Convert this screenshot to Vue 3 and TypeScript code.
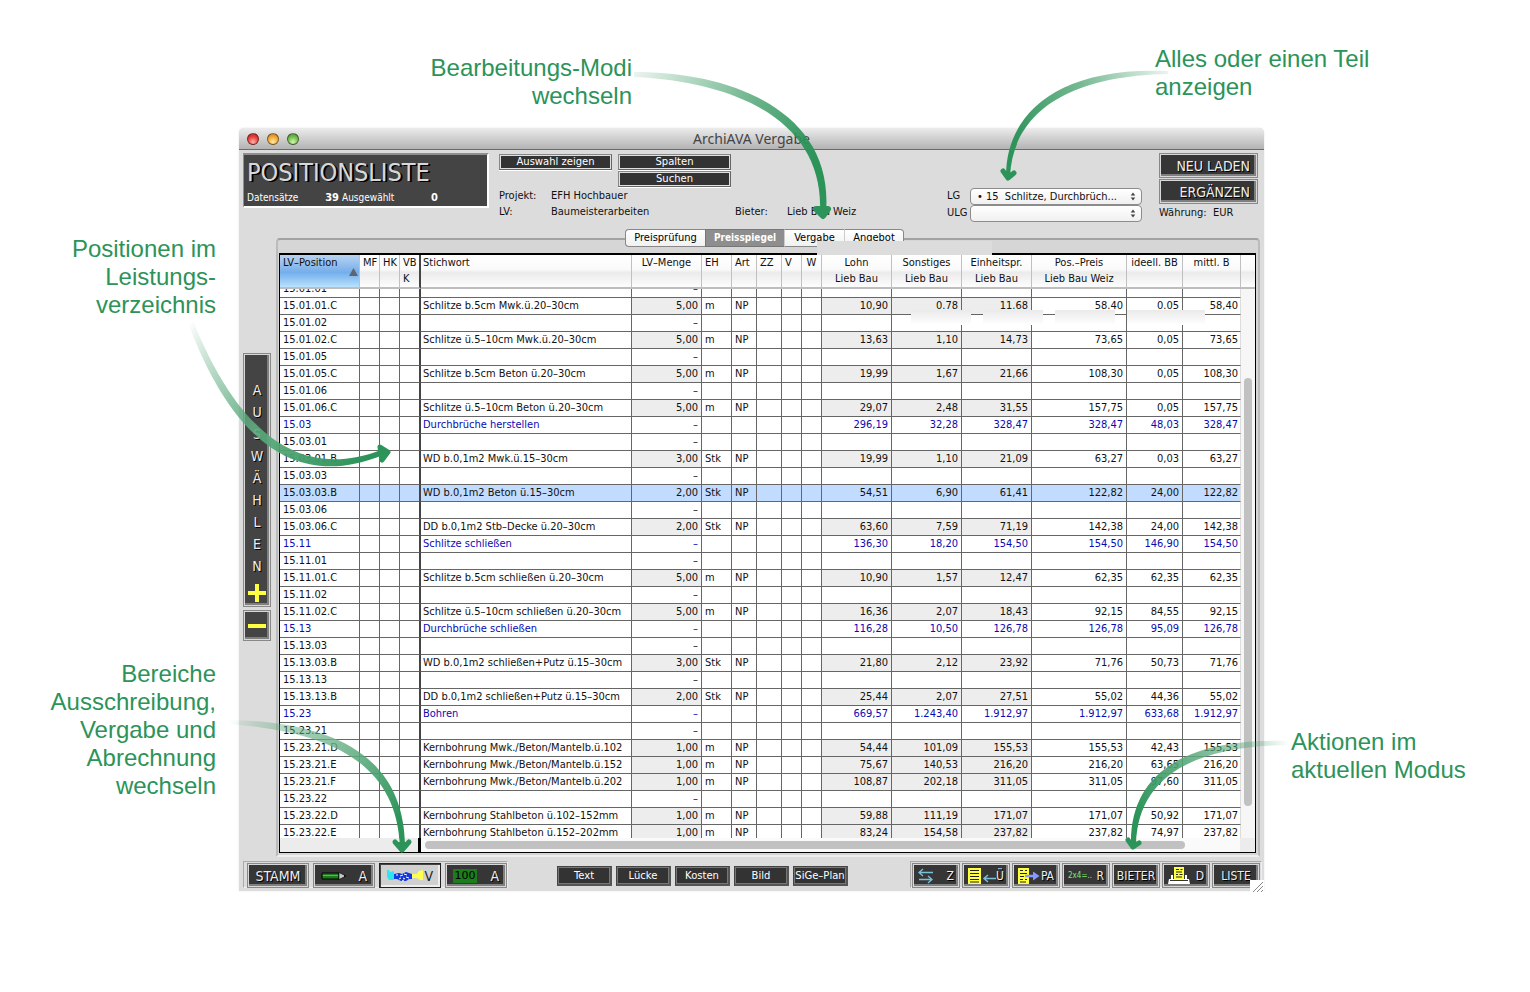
<script setup lang="ts">
import { onMounted, ref } from 'vue'

type Kind = 'empty' | 'sum' | 'item'
interface Row {
  pos: string
  kind: Kind
  text: string
  qty: string
  unit: string
  prices: string[]
}

const empty = (pos: string): Row => ({ pos, kind: 'empty', text: '', qty: '–', unit: '', prices: ['', '', '', '', '', ''] })
const sum = (pos: string, text: string, prices: string): Row => ({ pos, kind: 'sum', text, qty: '–', unit: '', prices: prices.split(' ') })
const item = (pos: string, text: string, qty: string, unit: string, prices: string): Row => ({
  pos, kind: 'item', text, qty, unit, prices: prices.split(' '),
})

const rows: Row[] = [
  empty('15.01.01'),
  item('15.01.01.C', 'Schlitze b.5cm Mwk.ü.20–30cm', '5,00', 'm', '10,90 0.78 11.68 58.40 0.05 58,40'),
  empty('15.01.02'),
  item('15.01.02.C', 'Schlitze ü.5–10cm Mwk.ü.20–30cm', '5,00', 'm', '13,63 1,10 14,73 73,65 0,05 73,65'),
  empty('15.01.05'),
  item('15.01.05.C', 'Schlitze b.5cm Beton ü.20–30cm', '5,00', 'm', '19,99 1,67 21,66 108,30 0,05 108,30'),
  empty('15.01.06'),
  item('15.01.06.C', 'Schlitze ü.5–10cm Beton ü.20–30cm', '5,00', 'm', '29,07 2,48 31,55 157,75 0,05 157,75'),
  sum('15.03', 'Durchbrüche herstellen', '296,19 32,28 328,47 328,47 48,03 328,47'),
  empty('15.03.01'),
  item('15.03.01.B', 'WD b.0,1m2 Mwk.ü.15–30cm', '3,00', 'Stk', '19,99 1,10 21,09 63,27 0,03 63,27'),
  empty('15.03.03'),
  item('15.03.03.B', 'WD b.0,1m2 Beton ü.15–30cm', '2,00', 'Stk', '54,51 6,90 61,41 122,82 24,00 122,82'),
  empty('15.03.06'),
  item('15.03.06.C', 'DD b.0,1m2 Stb–Decke ü.20–30cm', '2,00', 'Stk', '63,60 7,59 71,19 142,38 24,00 142,38'),
  sum('15.11', 'Schlitze schließen', '136,30 18,20 154,50 154,50 146,90 154,50'),
  empty('15.11.01'),
  item('15.11.01.C', 'Schlitze b.5cm schließen ü.20–30cm', '5,00', 'm', '10,90 1,57 12,47 62,35 62,35 62,35'),
  empty('15.11.02'),
  item('15.11.02.C', 'Schlitze ü.5–10cm schließen ü.20–30cm', '5,00', 'm', '16,36 2,07 18,43 92,15 84,55 92,15'),
  sum('15.13', 'Durchbrüche schließen', '116,28 10,50 126,78 126,78 95,09 126,78'),
  empty('15.13.03'),
  item('15.13.03.B', 'WD b.0,1m2 schließen+Putz ü.15–30cm', '3,00', 'Stk', '21,80 2,12 23,92 71,76 50,73 71,76'),
  empty('15.13.13'),
  item('15.13.13.B', 'DD b.0,1m2 schließen+Putz ü.15–30cm', '2,00', 'Stk', '25,44 2,07 27,51 55,02 44,36 55,02'),
  sum('15.23', 'Bohren', '669,57 1.243,40 1.912,97 1.912,97 633,68 1.912,97'),
  empty('15.23.21'),
  item('15.23.21.D', 'Kernbohrung Mwk./Beton/Mantelb.ü.102', '1,00', 'm', '54,44 101,09 155,53 155,53 42,43 155,53'),
  item('15.23.21.E', 'Kernbohrung Mwk./Beton/Mantelb.ü.152', '1,00', 'm', '75,67 140,53 216,20 216,20 63,65 216,20'),
  item('15.23.21.F', 'Kernbohrung Mwk./Beton/Mantelb.ü.202', '1,00', 'm', '108,87 202,18 311,05 311,05 97,60 311,05'),
  empty('15.23.22'),
  item('15.23.22.D', 'Kernbohrung Stahlbeton ü.102–152mm', '1,00', 'm', '59,88 111,19 171,07 171,07 50,92 171,07'),
  item('15.23.22.E', 'Kernbohrung Stahlbeton ü.152–202mm', '1,00', 'm', '83,24 154,58 237,82 237,82 74,97 237,82'),
]

const priceHeads = [
  ['Lohn', 'Lieb Bau'],
  ['Sonstiges', 'Lieb Bau'],
  ['Einheitspr.', 'Lieb Bau'],
  ['Pos.–Preis', 'Lieb Bau Weiz'],
  ['ideell. BB', ''],
  ['mittl. B', ''],
]
const tabs = ['Preisprüfung', 'Preisspiegel', 'Vergabe', 'Angebot']
const activeTab = ref('Preisspiegel')
const selected = ref('15.03.03.B')
const textButtons = ['Text', 'Lücke', 'Kosten', 'Bild', 'SiGe–Plan']
const viewport = ref<HTMLElement | null>(null)

onMounted(() => {
  if (viewport.value) viewport.value.scrollTop = 8
})
</script>

<template>
  <main class="page">
    <section class="window">
      <header class="titlebar">
        <div class="lights">
          <button class="light red" aria-label="Schließen"></button>
          <button class="light amber" aria-label="Minimieren"></button>
          <button class="light green" aria-label="Vergrößern"></button>
        </div>
        <span class="wintitle">ArchiAVA Vergabe</span>
      </header>

      <div class="top">
        <div class="banner">
          <h1>POSITIONSLISTE</h1>
          <div class="counts">
            <span class="c1">Datensätze</span><b class="n1">39</b><span class="c2">Ausgewählt</span><b class="n2">0</b>
          </div>
        </div>
        <div class="mid">
          <div class="midbtns">
            <button class="mini">Auswahl zeigen</button>
            <div class="stack">
              <button class="mini">Spalten</button>
              <button class="mini">Suchen</button>
            </div>
          </div>
          <div class="info">
            <span>Projekt:</span><span>EFH Hochbauer</span><span></span><span></span>
            <span>LV:</span><span>Baumeisterarbeiten</span><span>Bieter:</span><span>Lieb Bau Weiz</span>
          </div>
        </div>
        <div class="filters">
          <label for="lg">LG</label>
          <div class="pop">
            <select id="lg"><option>• 15&nbsp; Schlitze, Durchbrüch...</option></select>
            <svg viewBox="0 0 6 10"><path d="M0.500 4 L3 0.500 L5.500 4Z M0.500 6 L3 9.500 L5.500 6Z" fill="#444" /></svg>
          </div>
          <label for="ulg">ULG</label>
          <div class="pop">
            <select id="ulg"><option></option></select>
            <svg viewBox="0 0 6 10"><path d="M0.500 4 L3 0.500 L5.500 4Z M0.500 6 L3 9.500 L5.500 6Z" fill="#444" /></svg>
          </div>
        </div>
        <div class="actions">
          <button class="dark big">NEU LADEN</button>
          <button class="dark big">ERGÄNZEN</button>
          <span class="currency">Währung:&nbsp; EUR</span>
        </div>
      </div>

      <div class="middle">
        <aside class="rail">
          <button class="dark tall" aria-label="Auswählen hinzufügen">
            <span v-for="(c, i) in 'AUSWÄHLEN'" :key="i" class="letter">{{ c }}</span>
            <svg class="sign" viewBox="0 0 18 18"><path d="M7 0h4v7h7v4h-7v7H7v-7H0V7h7z" fill="#ffff42" /></svg>
          </button>
          <button class="dark minus" aria-label="Auswahl entfernen">
            <svg class="sign" viewBox="0 0 18 18"><path d="M0 7h18v4H0z" fill="#ffff42" /></svg>
          </button>
        </aside>

        <div class="tabpanel">
          <nav class="tabs">
            <button v-for="t in tabs" :key="t" :class="{ on: t === activeTab }" @click="activeTab = t">{{ t }}</button>
          </nav>
          <div class="frame">
            <div class="gridrow">
              <div ref="viewport" class="viewport">
                <table>
                  <colgroup>
                    <col class="w80" /><col class="w20" /><col class="w20" /><col class="w21" /><col />
                    <col class="w70" /><col class="w30" /><col class="w25" /><col class="w25" /><col class="w20" /><col class="w20" />
                    <col class="w70" /><col class="w70" /><col class="w70" /><col class="w95" /><col class="w56" /><col class="w58" />
                  </colgroup>
                  <thead>
                    <tr>
                      <th class="sorted">LV–Position<svg viewBox="0 0 9 8"><path d="M4.500 0L9 8H0z" fill="#5d6670" /></svg></th>
                      <th>MF</th><th>HK</th><th class="thick">VB<br />K</th><th>Stichwort</th>
                      <th class="c">LV–Menge</th><th>EH</th><th>Art</th><th>ZZ</th><th>V</th><th class="c">W</th>
                      <th v-for="h in priceHeads" :key="h[0]" class="c">{{ h[0] }}<br />{{ h[1] }}</th>
                    </tr>
                  </thead>
                  <tbody>
                    <tr v-for="r in rows" :key="r.pos" :class="[r.kind, { sel: r.pos === selected }]" @click="selected = r.pos">
                      <td>{{ r.pos }}</td><td></td><td></td><td class="thick"></td>
                      <td>{{ r.text }}</td>
                      <td class="num shade">{{ r.qty }}</td>
                      <td>{{ r.unit }}</td>
                      <td>{{ r.kind === 'item' ? 'NP' : '' }}</td>
                      <td></td><td></td><td></td>
                      <td v-for="(p, i) in r.prices" :key="i" class="num" :class="{ shade: i < 3, last: i === 5 }">{{ p }}</td>
                    </tr>
                  </tbody>
                </table>
              </div>
              <div class="vscroll">
                <div class="vhead"></div>
                <div class="vthumb"></div>
              </div>
            </div>
            <div class="hscroll">
              <div class="hleft"></div>
              <div class="hthumb"></div>
              <div class="hend"></div>
            </div>
            <div class="smears"><i></i><i></i><i></i><i class="wide"></i></div>
          </div>
          <div class="patch"></div>
        </div>
      </div>

      <footer class="bottom">
        <div class="group">
          <button class="dark nav">STAMM</button>
          <button class="dark nav icon">
            <svg width="26" height="10" viewBox="0 0 26 10"><path d="M1 2h17v6H1z" fill="#1d7d1d" stroke="#000" /><path d="M2 4.500h15" stroke="#5cb85c" /><path d="M18 1.500L25 5l-7 3.500z" fill="#c9c9c9" stroke="#000" stroke-width=".6" /><path d="M23 4l2.500 1L23 6z" /></svg>
            A
          </button>
          <button class="dark nav icon pressed">
            <svg width="36" height="14" viewBox="0 0 36 14"><path d="M0 1h2l1 2 4-1v9H2L0 8z" fill="#2fe4ee" /><path d="M36 1v10h-3l-3-2h-5V5h5l2-3z" fill="#ffff50" /><path d="M7 5l5-1 3 1 4-2 6 2v5h-3l-3 2h-5l-4-2H7z" fill="#1238e0" /><path d="M9 6h2M13 7l3-1M17 5l3 1M12 10l2-1M16 9l2 1M19 8l3 1M15 12l2-1" stroke="#fff" /></svg>
            V
          </button>
          <button class="dark nav icon">
            <span class="hundred">100</span>
            A
          </button>
        </div>

        <div class="texts">
          <button v-for="b in textButtons" :key="b">{{ b }}</button>
        </div>

        <div class="group right">
          <button class="dark act icon">
            <svg width="16" height="16" viewBox="0 0 16 16"><path d="M1 4.500h14M5 1L1 4.500 5 8M1 11.500h13M10 8l4 3.500-4 3.500" fill="none" stroke="#7cc0d8" stroke-width="1.300" /></svg>
            Z
          </button>
          <button class="dark act icon">
            <svg width="28" height="16" viewBox="0 0 28 16"><path d="M0 0h13v16H0z" fill="#ffff42" /><path d="M2 2.500h9M2 5.500h9M2 8.500h9M2 11.500h9M2 14h9" stroke="#222" /><path d="M28 10.500H17M20 7l-4 3.500L20 14" fill="none" stroke="#7cc0d8" stroke-width="1.500" /></svg>
            Ü
          </button>
          <button class="dark act icon">
            <svg width="22" height="16" viewBox="0 0 22 16"><path d="M0 0h11v16H0z" fill="#ffff42" /><path d="M2 2.500h3M7 2.500h2M2 5.500h7M2 8.500h4M2 11.500h3M7 11.500h2M2 14h6" stroke="#222" /><path d="M7 8h9" stroke="#8a98ff" stroke-width="2.500" /><path d="M15 3.500L21.500 8 15 12.500z" fill="#8a98ff" /></svg>
            PA
          </button>
          <button class="dark act icon"><span class="calc">2x4=..</span>R</button>
          <button class="dark act">BIETER</button>
          <button class="dark act icon">
            <svg width="22" height="18" viewBox="0 0 22 18"><path d="M6 0h10v12H6z" fill="#ffff42" /><path d="M8 2.500h3M12.500 2.500h2M8 5h6M8 7.500h2M11.500 7.500h3M8 10h6" stroke="#222" /><path d="M3 8h2v4h12V8h2v4h2l1 5H0l1-5h2z" fill="#fff" /><path d="M2 13.500h18" stroke="#333" /></svg>
            D
          </button>
          <button class="dark act">LISTE</button>
        </div>
        <svg class="grip" viewBox="0 0 14 13"><path d="M0 0h14v13H0z" fill="#fff" /><path d="M3 12L13 2M7 12l6-6M11 12l2-2" stroke="#8a8a8a" /></svg>
      </footer>
    </section>

    <p class="note n-modes">Bearbeitungs-Modi<br />wechseln</p>
    <p class="note n-filter">Alles oder einen Teil<br />anzeigen</p>
    <p class="note n-pos">Positionen im<br />Leistungs-<br />verzeichnis</p>
    <p class="note n-areas">Bereiche<br />Ausschreibung,<br />Vergabe und<br />Abrechnung<br />wechseln</p>
    <p class="note n-actions">Aktionen im<br />aktuellen Modus</p>

    <svg class="arrows left" width="900" height="992" viewBox="0 0 900 992">
      <defs>
        <linearGradient id="ga" gradientUnits="userSpaceOnUse" x1="634" y1="75" x2="815" y2="160">
          <stop offset="0" stop-color="#2c9359" stop-opacity="0.100" /><stop offset=".6" stop-color="#2c9359" stop-opacity=".7" /><stop offset="1" stop-color="#2c9359" />
        </linearGradient>
        <linearGradient id="gc" gradientUnits="userSpaceOnUse" x1="190" y1="322" x2="370" y2="455">
          <stop offset="0" stop-color="#2c9359" stop-opacity="0" /><stop offset=".5" stop-color="#5fac80" stop-opacity=".9" /><stop offset="1" stop-color="#2c9359" />
        </linearGradient>
        <linearGradient id="gd" gradientUnits="userSpaceOnUse" x1="229" y1="722" x2="400" y2="820">
          <stop offset="0" stop-color="#2c9359" stop-opacity="0" /><stop offset=".5" stop-color="#6fb48c" stop-opacity=".8" /><stop offset="1" stop-color="#2c9359" />
        </linearGradient>
      </defs>
      <path fill="url(#ga)" d="M634 72C740 72 834 116 826 212L820 212C824 124 742 82 634 77Z" />
      <path class="head" d="M816 209L823 216L828 209Z" />
      <path fill="url(#gc)" d="M188 323C218 402 274 500 383 455L381 450C282 488 226 402 193 321Z" />
      <path class="head thin" d="M380 447L388 452L382 460Z" />
      <path fill="url(#gd)" d="M229 720C340 722 404 760 405 846L400 846C396 766 336 732 229 724Z" />
      <path class="head thin" d="M395 842L402 850L409 842" />
    </svg>
    <svg class="arrows rightside" width="530" height="992" viewBox="1000 0 530 992">
      <defs>
        <linearGradient id="gb" gradientUnits="userSpaceOnUse" x1="1168" y1="72" x2="1012" y2="140">
          <stop offset="0" stop-color="#2c9359" stop-opacity=".1" /><stop offset=".5" stop-color="#2c9359" stop-opacity=".65" /><stop offset="1" stop-color="#2c9359" />
        </linearGradient>
        <linearGradient id="ge" gradientUnits="userSpaceOnUse" x1="1289" y1="743" x2="1138" y2="820">
          <stop offset="0" stop-color="#2c9359" stop-opacity="0" /><stop offset=".5" stop-color="#5fac80" stop-opacity=".85" /><stop offset="1" stop-color="#2c9359" />
        </linearGradient>
      </defs>
      <path fill="url(#gb)" d="M1168 71C1060 66 1006 112 1006 176L1010 176C1013 118 1060 76 1168 74Z" />
      <path class="head thin" d="M1003 171L1008 178L1014 173" />
      <path fill="url(#ge)" d="M1289 741C1190 738 1130 770 1131 844L1136 844C1138 780 1188 746 1289 745Z" />
      <path class="head thin" d="M1128 840L1133 847L1139 843" />
    </svg>
  </main>
</template>

<style>
body {
  margin: 0;
  background: #fff;
}
</style>

<style scoped>
.page {
  position: relative;
  box-sizing: border-box;
  min-width: 1300px;
  padding: 128px 266px 99px 239px;
  font-family: "DejaVu Sans Condensed", "Noto Sans", sans-serif;
  font-size: 11px;
  color: #111;
}
button {
  font: inherit;
  margin: 0;
  padding: 0;
  border: 0;
  box-sizing: border-box;
}
.window {
  display: flex;
  flex-direction: column;
  background: #dcdcdc;
  border-radius: 5px 5px 0 0;
  box-shadow: 0 0 2px rgba(0, 0, 0, 0.12);
}
.titlebar {
  display: flex;
  align-items: center;
  height: 22px;
  box-sizing: border-box;
  border-bottom: 1px solid #6c6c6c;
  border-radius: 5px 5px 0 0;
  background: linear-gradient(#ececec, #b3b3b3);
  padding: 0 8px;
}
.lights {
  display: flex;
  gap: 8px;
  width: 80px;
}
.light {
  width: 12px;
  height: 12px;
  border-radius: 50%;
  border: 1px solid rgba(0, 0, 0, 0.45);
}
.red { background: radial-gradient(circle at 50% 80%, #ffb3a8, #e8403c 55%, #b3282a); }
.amber { background: radial-gradient(circle at 50% 80%, #ffe9a0, #f0a83a 55%, #b87620); }
.green { background: radial-gradient(circle at 50% 80%, #d4f7b0, #76bb50 55%, #4a8a35); }
.wintitle {
  flex: 1;
  padding-right: 80px;
  text-align: center;
  font-family: "Noto Sans", sans-serif;
  font-size: 14px;
  line-height: 20px;
  color: #444;
}
.top {
  display: flex;
  height: 79px;
  box-sizing: border-box;
  padding: 3px 6px 0 4px;
}
.banner {
  width: 246px;
  height: 55px;
  box-sizing: border-box;
  background: #444;
  border: 1px solid #8f8f8f;
  border-top-width: 2px;
  border-right: 2px solid #fff;
  border-bottom: 2px solid #fff;
  padding: 0 3px;
  color: #fff;
}
h1 {
  margin: 0;
  font: 25px/36px "Liberation Sans Narrow", "DejaVu Sans Condensed", sans-serif;
  color: #d8d8d8;
  text-shadow: 2px 1px 0 #000;
}
.counts {
  display: flex;
  font-size: 10px;
  line-height: 14px;
}
.c1 { width: 64px; }
.c2 { width: 56px; }
.n1 { width: 31px; padding-right: 3px; box-sizing: border-box; text-align: right; font-size: 11px; }
.n2 { width: 40px; text-align: right; font-size: 11px; }
.mid {
  margin-left: 10px;
  flex: 1;
}
.midbtns {
  display: flex;
  gap: 6px;
  height: 35px;
  padding-top: 1px;
  box-sizing: border-box;
  align-items: flex-start;
}
.stack {
  display: flex;
  flex-direction: column;
  gap: 1px;
}
.mini {
  width: 113px;
  height: 16px;
  background: #333;
  color: #fff;
  border: 1px solid #777;
  border-color: #888 #666 #666 #888;
  box-shadow: inset 0 0 0 1px #e0e0e0, 0 1px 0 #fff;
  font: 10px/14px "DejaVu Sans", sans-serif;
}
.info {
  display: grid;
  grid-template-columns: 52px 184px 52px auto;
  grid-auto-rows: 16px;
  line-height: 16px;
}
.filters {
  display: grid;
  grid-template-columns: 23px 172px;
  grid-auto-rows: 17px;
  align-content: start;
  padding-top: 35px;
  line-height: 16px;
}
.pop {
  position: relative;
}
.pop select {
  appearance: none;
  width: 100%;
  height: 17px;
  display: block;
  box-sizing: border-box;
  border: 1px solid #8c8c8c;
  border-radius: 4px;
  background: linear-gradient(#fff, #f0f0f0);
  padding: 0 6px;
  font: inherit;
  line-height: 15px;
  color: #111;
}
.pop svg {
  position: absolute;
  right: 6px;
  top: 4px;
  width: 6px;
  height: 9px;
}
.actions {
  width: 99px;
  margin-left: 17px;
  display: flex;
  flex-direction: column;
  gap: 1px;
}
.currency {
  line-height: 16px;
  white-space: nowrap;
}
.dark {
  background: #363636;
  color: #eee;
  border: 1px solid #888;
  box-shadow: inset 0 0 0 1px #d8d8d8, inset -2px -2px 0 1px #808080;
  font-family: "Liberation Sans Narrow", "DejaVu Sans Condensed", sans-serif;
  font-size: 14px;
  line-height: 18px;
  text-shadow: 1px 1px 0 #000;
}
.big {
  height: 25px;
  text-align: right;
  padding-right: 7px;
}
.middle {
  display: flex;
}
.rail {
  width: 33px;
  padding: 124px 0 0 4px;
  margin-right: 4px;
  box-sizing: border-box;
}
.rail .dark {
  background: #444;
  width: 28px;
  display: flex;
  flex-direction: column;
  align-items: center;
}
.tall {
  height: 254px;
  padding: 25px 0 4px;
}
.letter {
  height: 22px;
  line-height: 22px;
}
.sign {
  width: 18px;
  height: 18px;
  margin-top: auto;
}
.minus {
  height: 31px;
  margin-top: 3px;
  justify-content: center;
}
.minus .sign { margin: 0; }
.tabpanel {
  position: relative;
  flex: 1;
  margin-right: 4px;
  min-width: 0;
}
.tabpanel::before {
  content: "";
  position: absolute;
  inset: 9px 0 0 0;
  border: 2px solid #bbb;
  border-top-color: #a2a2a2;
  border-bottom-color: #eee;
  border-radius: 4px 4px 0 0;
  background: #d6d6d6;
}
.tabs {
  position: relative;
  display: flex;
  justify-content: center;
  height: 24px;
  padding-right: 7px;
}
.tabs button {
  width: 60px;
  height: 18px;
  line-height: 16px;
  background: linear-gradient(#fff, #f1f1f1);
  border: 1px solid #888;
  border-left-color: #ccc;
  border-right-width: 0;
}
.tabs button:nth-child(-n + 2) { width: 79px; }
.tabs button:first-child { width: 80px; border-left-color: #888; border-radius: 4px 0 0 4px; }
.tabs button:last-child { border-right-width: 1px; border-radius: 0 4px 4px 0; }
.tabs .on {
  background: #8e8e8e;
  border-color: #777;
  color: #fff;
  font-size: 10px;
  font-weight: bold;
}
.patch {
  position: absolute;
  left: 541px;
  top: 12px;
  width: 175px;
  height: 16px;
  background: #dcdcdc;
}
.frame {
  position: relative;
  margin: 0 4px 4px 3px;
  border: 1px solid #000;
  border-top-width: 2px;
  background: #fff;
}
.gridrow {
  display: flex;
  height: 583px;
}
.viewport {
  flex: 1;
  min-width: 0;
  overflow: hidden;
}
table {
  width: 100%;
  table-layout: fixed;
  border-collapse: separate;
  border-spacing: 0;
}
.w20 { width: 20px; }
.w21 { width: 21px; }
.w25 { width: 25px; }
.w30 { width: 30px; }
.w56 { width: 56px; }
.w58 { width: 58px; }
.w70 { width: 70px; }
.w80 { width: 80px; }
.w95 { width: 95px; }
th {
  position: sticky;
  top: 0;
  z-index: 1;
  height: 34px;
  box-sizing: border-box;
  padding: 0 0 0 3px;
  font-weight: normal;
  text-align: left;
  vertical-align: top;
  line-height: 16px;
  white-space: nowrap;
  border-right: 1px solid #c0c0c0;
  border-bottom: 2px solid #bdbdbd;
  background: linear-gradient(#fff 0%, #fafafa 45%, #ebebeb 55%, #fdfdfd 100%);
}
th.c { text-align: center; padding: 0; }
th.sorted { background: linear-gradient(#b9d3f0 0%, #80b4ec 45%, #74aeec 55%, #b8e2fd 100%); }
th.sorted svg {
  position: absolute;
  right: 1px;
  top: 13px;
  width: 9px;
  height: 8px;
}
td {
  height: 17px;
  box-sizing: border-box;
  padding: 0 0 0 3px;
  line-height: 16px;
  white-space: nowrap;
  overflow: hidden;
  border-right: 1px solid #666;
  border-bottom: 1px solid #666;
}
.thick {
  border-right: 2px solid #444;
}
.thick + th,
.thick + td {
  padding-left: 2px;
}
td.num { text-align: right; padding: 0 3px 0 0; }
td.last { padding-right: 2px; border-right-color: #ddd; }
.item .shade { background: #ededed; }
.sum td { color: #0a0ab4; }
.sel td,
.sel.item .shade { background: #c1dcfe; }
.vscroll {
  width: 14px;
  background: #f6f6f6;
}
.vhead {
  height: 32px;
  border-bottom: 2px solid #bdbdbd;
  background: linear-gradient(#fff 0%, #fafafa 45%, #ebebeb 55%, #fdfdfd 100%);
}
.vthumb {
  width: 8px;
  height: 428px;
  margin: 89px 0 0 3px;
  border-radius: 4px;
  background: #c1c1c1;
}
.hscroll {
  display: flex;
  align-items: center;
  height: 14px;
  background: #fafafa;
}
.hleft {
  width: 138px;
  height: 14px;
  background: #ececec;
  border-right: 3px solid #000;
  margin-right: 4px;
}
.hthumb {
  flex: 1;
  height: 8px;
  border-radius: 4px;
  background: #c1c1c1;
  margin-right: 55px;
}
.hend {
  width: 15px;
  height: 14px;
  background: #ececec;
}
.smears {
  position: absolute;
  top: 55px;
  right: 50px;
  display: flex;
  gap: 12px;
}
.smears i {
  width: 60px;
  height: 15px;
  background: linear-gradient(#eaeaea, #fff);
}
.smears .wide { width: 78px; }
.bottom {
  position: relative;
  display: flex;
  height: 34px;
  padding: 4px 2px 0 4px;
  box-sizing: border-box;
}
.group {
  display: flex;
  gap: 4px;
  height: 27px;
  box-sizing: border-box;
  padding: 1px 0 0 3px;
  border: 1px solid #aaa;
  border-right-color: #eee;
  border-bottom-color: #eee;
}
.group.right {
  gap: 2px;
  margin-left: auto;
  padding-left: 1px;
  padding-right: 1px;
}
.group .dark { height: 25px; }
.nav { width: 62px; }
.act { width: 48px; }
.group .dark.act { font-size: 12px; }
.icon {
  display: flex;
  align-items: center;
  justify-content: space-between;
  padding: 0 7px;
}
.act.icon { padding: 0 5px; }
.dark.pressed {
  background: #d0d0d0;
  color: #222;
  text-shadow: none;
  border: 1px solid #222;
  box-shadow: inset 1px 1px 0 #444, inset -2px -2px 0 #eee;
}
.hundred {
  width: 24px;
  height: 14px;
  box-sizing: border-box;
  background: #1d7d1d;
  color: #000;
  font: 11px/14px "DejaVu Sans", sans-serif;
  text-align: center;
  text-shadow: none;
}
.calc {
  font: 8px/12px "DejaVu Sans Condensed", sans-serif;
  color: #7de87d;
  text-shadow: none;
}
.texts {
  display: flex;
  gap: 4px;
  padding: 5px 0 0;
  margin-left: 49px;
}
.texts button {
  width: 55px;
  height: 20px;
  background: #333;
  color: #fff;
  border: 1px solid #444;
  border-right: 2px solid #555;
  border-bottom: 2px solid #555;
  box-shadow: inset 0 0 0 1px #777;
  font: 10px/14px "DejaVu Sans", sans-serif;
  white-space: nowrap;
}
.grip {
  position: absolute;
  right: 0;
  bottom: -2px;
  width: 14px;
  height: 13px;
}
.note {
  position: absolute;
  margin: 0;
  font: 24px/28px "Liberation Sans", Arial, sans-serif;
  color: #2c9359;
  white-space: nowrap;
}
.n-modes { right: calc(100% - 632px); top: 54px; text-align: right; }
.n-filter { left: calc(100% - 375px); top: 45px; }
.n-pos { right: calc(100% - 216px); top: 235px; text-align: right; }
.n-areas { right: calc(100% - 216px); top: 660px; text-align: right; }
.n-actions { left: calc(100% - 239px); top: 728px; }
.arrows {
  position: absolute;
  top: 0;
  pointer-events: none;
}
.arrows.left { left: 0; }
.arrows.rightside { right: 0; }
.head {
  fill: #2c9359;
  stroke: #2c9359;
  stroke-width: 6;
  stroke-linecap: round;
  stroke-linejoin: round;
}
.head.thin { stroke-width: 5; }
</style>
